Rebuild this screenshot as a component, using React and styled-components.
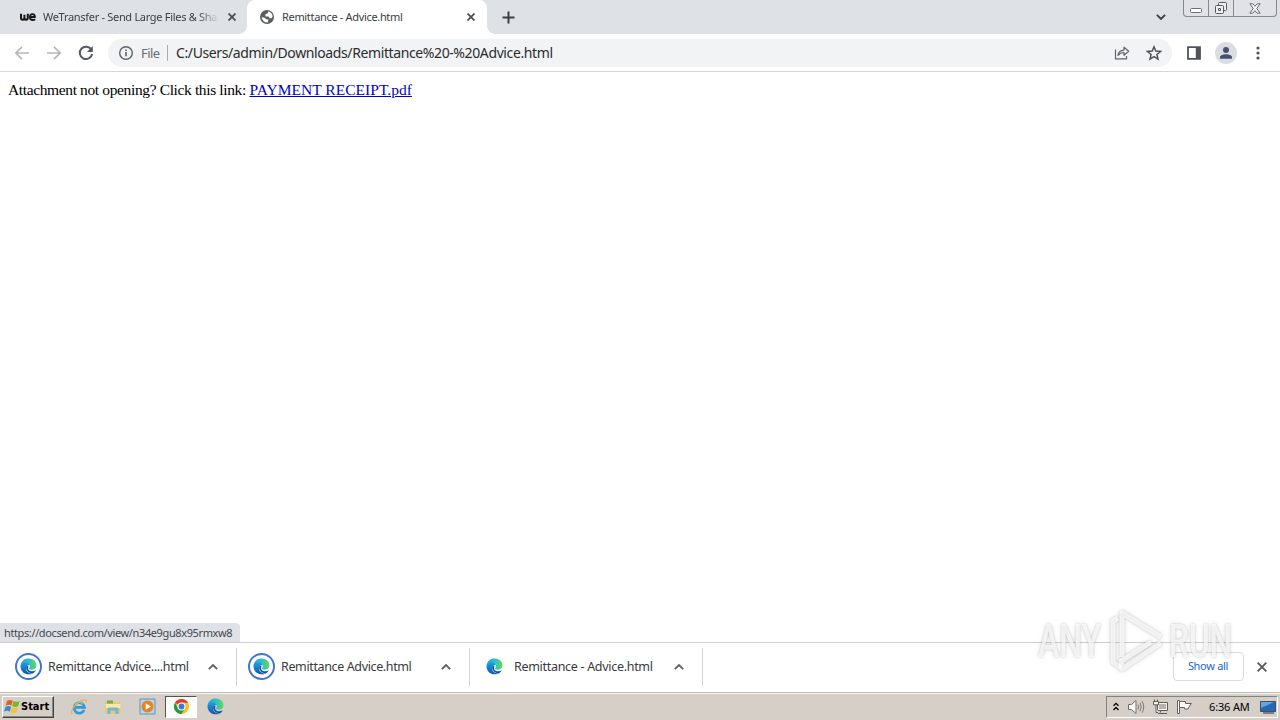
import React from "react"
import styled, { createGlobalStyle, css } from 'styled-components'

const GlobalStyle = createGlobalStyle`
  * {
    box-sizing: border-box;
  }

  body {
    margin: 0;
    overflow: hidden;
    background: #fff;
  }
`

const uiFont = '"Noto Sans", "Open Sans", sans-serif'
const frameColor = '#dee1e6'
const taskbarColor = '#d6cfc8'

const Screen = styled.div`
  position: relative;
  display: flex;
  flex-direction: column;
  width: 1280px;
  height: 720px;
  font-family: ${uiFont};
  color: #383a3e;
`

const Label = styled.span`
  display: block;
  flex: none;
  white-space: pre;
  font-size: ${props => props.$size || 11}px;
  line-height: 16px;
  letter-spacing: ${props => props.$spacing || 0}px;
`

const TabStrip = styled.div`
  display: flex;
  flex: none;
  height: 34px;
  background: ${frameColor};
`

const Tab = styled.div`
  position: relative;
  display: flex;
  align-items: center;
  flex: none;
  width: ${props => props.$active ? 240 : 247}px;
  padding: 0 ${props => props.$active ? 12 : 11}px 0 ${props => props.$active ? 12 : 20}px;
  color: #3c4043;
  ${props => props.$active && css`
    background: #fff;
    border-radius: 8px 8px 0 0;

    &::before,
    &::after {
      position: absolute;
      bottom: 0;
      width: 8px;
      height: 8px;
      content: "";
    }

    &::before {
      left: -8px;
      background: radial-gradient(circle at 0 0, transparent 7.5px, #fff 8px);
    }

    &::after {
      right: -8px;
      background: radial-gradient(circle at 100% 0, transparent 7.5px, #fff 8px);
    }
  `}
`

const TabTitle = styled(Label)`
  flex: 1;
  min-width: 0;
  margin-left: 7px;
  margin-right: ${props => props.$fade ? 9 : 0}px;
  overflow: hidden;
  ${props => props.$fade && css`
    mask-image: linear-gradient(to right, #000 88%, transparent);
  `}
`

const NewTab = styled.div`
  display: flex;
  align-items: center;
  margin-left: 15px;
`

const StripEnd = styled.div`
  display: flex;
  align-items: flex-start;
  margin-left: auto;
  padding-right: 3px;

  > svg {
    margin: 12px 17px 0 0;
  }
`

const WindowButtons = styled.div`
  display: flex;
  width: 94px;
  height: 17px;
  border: 1px solid #85888e;
  border-top: 0;
  border-radius: 0 0 4px 4px;
  background: #e0e2e7;
`

const WindowButton = styled.div`
  display: flex;
  align-items: center;
  justify-content: center;
  flex: none;
  width: ${props => props.$width}px;

  & + & {
    border-left: 1px solid #85888e;
  }
`

const Toolbar = styled.div`
  display: flex;
  align-items: center;
  flex: none;
  height: 38px;
  padding: 0 14px;
  border-bottom: 1px solid #d5d7da;
  background: #fff;
`

const NavButtons = styled.div`
  display: flex;
  gap: 16px;
  margin-right: 14px;
`

const AddressBar = styled.div`
  display: flex;
  align-items: center;
  width: 1064px;
  height: 28px;
  padding: 0 10px;
  border-radius: 14px;
  background: #f1f3f4;
`

const Scheme = styled(Label)`
  width: 19px;
  margin-left: 7px;
  padding-right: 7px;
  box-sizing: content-box;
  border-right: 1px solid #a9acb0;
  color: #6a6e73;
`

const Address = styled(Label)`
  margin-left: 8px;
  color: #2b2c30;
`

const AddressActions = styled.div`
  display: flex;
  gap: 16px;
  margin-left: auto;
`

const BrowserActions = styled.div`
  display: flex;
  align-items: center;
  margin-left: 15px;
`

const Avatar = styled.div`
  display: flex;
  align-items: center;
  justify-content: center;
  width: 22px;
  height: 22px;
  margin: 0 13px 0 14px;
  border-radius: 50%;
  background: #dadde2;
`

const Page = styled.main`
  flex: 1;
  padding: 8px;
  font: 15.5px/20px "Liberation Serif", serif;
  letter-spacing: -.37px;
  color: #000;
  background: #fff;

  a {
    color: #0000c8;
    letter-spacing: .03px;
    text-decoration: underline;
  }
`

const StatusBubble = styled.div`
  position: absolute;
  left: 0;
  bottom: 78px;
  display: flex;
  align-items: center;
  width: 240px;
  height: 19px;
  padding-left: 4px;
  border-radius: 0 4px 0 0;
  background: ${frameColor};
  color: #45484d;
`

const Shelf = styled.div`
  display: flex;
  align-items: center;
  flex: none;
  height: 50px;
  padding: 0 13px 2px 4px;
  border-top: 1px solid #cfcfcf;
  background: #fff;
`

const Download = styled.div`
  display: flex;
  align-items: center;
  width: 233px;
  height: 38px;
  padding: 0 18px 0 11px;
  border-right: 1px solid #d0d2d5;

  > svg {
    margin-left: auto;
  }
`

const FileIcon = styled.div`
  display: flex;
  align-items: center;
  justify-content: center;
  width: 27px;
  height: 27px;
  margin-right: 6px;
  border: 2px solid ${props => props.$ring ? '#3f77cf' : 'transparent'};
  border-radius: 50%;
`

const ShowAll = styled.div`
  display: flex;
  align-items: center;
  justify-content: center;
  width: 71px;
  height: 29px;
  margin-left: auto;
  margin-right: 13px;
  padding-right: 1px;
  padding-bottom: 2px;
  border: 1px solid #dadce0;
  border-radius: 4px;
  color: #1a66c9;
`

const Taskbar = styled.div`
  display: flex;
  align-items: center;
  flex: none;
  height: 28px;
  padding: 1px 2px 1px 2px;
  border-top: 1px solid #bdbab6;
  background: ${taskbarColor};
  box-shadow: inset 0 1px #f7f5f2;
`

const StartButton = styled.div`
  display: flex;
  align-items: center;
  width: 52px;
  height: 22px;
  padding-left: 1px;
  border: 1px solid;
  border-color: #fff #45423f #45423f #fff;
  box-shadow: inset -1px -1px #8b8782;
  color: #000;
  font-family: "DejaVu Sans Condensed", "DejaVu Sans", sans-serif;
  font-weight: bold;
`

const QuickLaunch = styled.div`
  display: flex;
  align-items: center;
  margin-left: 8px;
`

const Launcher = styled.div`
  display: flex;
  align-items: center;
  justify-content: center;
  width: 32px;
  height: 22px;
  margin: 0 1px;
  ${props => props.$pressed && css`
    border: 1px solid;
    border-color: #55514d #fff #fff #55514d;
    background: #fdfcfb;
  `}
`

const Tray = styled.div`
  display: flex;
  align-items: center;
  width: 172px;
  height: 22px;
  margin-left: auto;
  padding-left: 5px;
  border: 1px solid;
  border-color: #85817c #fff #fff #85817c;
  color: #000;

  > svg {
    flex: none;
    margin-right: 7px;
  }
`

const Clock = styled(Label)`
  width: 43px;
  margin: 0 8px 0 9px;
`

const Watermark = styled.svg`
  position: absolute;
  left: 1030px;
  top: 600px;
  filter: drop-shadow(0 0 1px rgba(0, 0, 0, .2)) drop-shadow(0 0 2px rgba(0, 0, 0, .16));
`

const Cross = ({ size = 8, color = '#4b4e52', width = 1.8 }) => (
  <svg width={size} height={size} viewBox="0 0 8 8" stroke={color} strokeWidth={width * 8 / size}>
    <path d="M.5.5l7 7M7.5.5l-7 7" />
  </svg>
)

const Chevron = ({ down }) => (
  <svg width="10" height="10" viewBox="0 0 10 10" fill="none" stroke={down ? '#3c4043' : '#5f6368'} strokeWidth="1.9">
    <path d={down ? "M.9 2.8L5 6.9l4.1-4.1" : "M.8 7.2L5 3l4.2 4.2"} />
  </svg>
)

const Arrow = ({ forward }) => (
  <svg width="16" height="16" viewBox="0 0 16 16" fill="none" stroke="#b5b7ba" strokeWidth="1.7">
    <path d={forward ? "M1 8h13M8 1.8L14.2 8 8 14.2" : "M15 8H2M8 1.8L1.8 8 8 14.2"} />
  </svg>
)

const Edge = ({ size = 17 }) => (
  <svg width={size} height={size} viewBox="0 0 32 32">
    <defs>
      <linearGradient id="edge-top" x1="0" y1=".5" x2="1" y2=".5">
        <stop offset="0" stopColor="#1ba5e0" />
        <stop offset=".5" stopColor="#2bc0cb" />
        <stop offset="1" stopColor="#62d957" />
      </linearGradient>
      <linearGradient id="edge-body" x1="0" y1="0" x2="0" y2="1">
        <stop offset="0" stopColor="#1fa0e6" />
        <stop offset="1" stopColor="#0d55b0" />
      </linearGradient>
    </defs>
    <path d="M1 15C2 6 8 1 16 1c9 0 15 6 15 13 0 5-4 8-9 8-4 0-6-1-5-3 2-2 2-4 1-6C14 7 5 8 1 15z" fill="url(#edge-top)" />
    <path d="M1 16C1 10 6 7 11 8c4 0 7 3 7 6-5-1-8 4-6 9 2 4 7 7 12 6-10 5-23-1-23-13z" fill="url(#edge-body)" />
    <path d="M12 16c-2 7 5 13 12 13 2-1 4-3 6-6-5 3-11 3-14-1-1-2-1-4 0-7-2 0-3 0-4 1z" fill="#12509b" />
  </svg>
)

const Globe = () => (
  <svg width="16" height="16" viewBox="0 0 16 16">
    <circle cx="8" cy="8" r="7" fill="#5a5d61" />
    <path d="M9 2.4v1.7L6.3 5.6l.2 1.9h3.1l1 1.8h1.9l1.1-1.6A5.4 5.4 0 009 2.4zM2.6 8.3l3 .4 1.6 1.6 2.3.3-.7 2.8A5.5 5.5 0 012.6 8.3z" fill="#fff" />
  </svg>
)

const WeTransferIcon = () => (
  <svg width="16" height="16" viewBox="0 0 16 16" fill="none" stroke="#17181a">
    <path d="M1 4.8v4.3q0 1.7 1.7 1.7T4.4 8.8V5.8v3q0 2 1.7 2t1.7-1.7V4.8" strokeWidth="2" />
    <path d="M10.2 8h4.7c0-2-1-2.9-2.4-2.9-1.5 0-2.6 1.2-2.6 2.9 0 2 1.1 3 2.8 3 1 0 1.8-.3 2.4-.8" strokeWidth="1.8" />
  </svg>
)

const Reload = () => (
  <svg width="16" height="16" viewBox="0 0 16 16">
    <path d="M13.4 4.8A6.2 6.2 0 1014.1 9" fill="none" stroke="#55585c" strokeWidth="2" />
    <path d="M14.8 1v6H8.9z" fill="#55585c" />
  </svg>
)

const Info = () => (
  <svg width="16" height="16" viewBox="0 0 16 16" fill="none" stroke="#5f6368">
    <circle cx="8" cy="8" r="6.3" strokeWidth="1.4" />
    <path d="M8 7v4.3M8 4.4v1.5" strokeWidth="1.6" />
  </svg>
)

const Share = () => (
  <svg width="16" height="16" viewBox="0 0 16 16" fill="none" stroke="#5f6368" strokeWidth="1.2">
    <path d="M1.5 4.5v9.4h11v-3" />
    <path d="M4 10.5c.3-3.4 2.3-5.2 6-5.4V2.2l4.7 4.1-4.7 4V7.5c-2.7 0-4.6.9-6 3z" strokeLinejoin="round" />
  </svg>
)

const Star = () => (
  <svg width="16" height="16" viewBox="0 0 16 16" fill="none" stroke="#505357" strokeWidth="1.5">
    <path d="M8 1.8l1.8 4.3 4.7.4-3.6 3 1.1 4.6L8 11.6l-4 2.5 1.1-4.6-3.6-3 4.7-.4z" />
  </svg>
)

const SidePanel = () => (
  <svg width="14" height="14" viewBox="0 0 14 14">
    <path d="M1 1.2h12v11.6H1z" fill="none" stroke="#505357" strokeWidth="1.8" />
    <path d="M8.8 1H13v12H8.8z" fill="#505357" />
  </svg>
)

const User = () => (
  <svg width="14" height="14" viewBox="0 0 14 14" fill="#46516d">
    <circle cx="7" cy="4" r="3" />
    <path d="M1 12.7v-1.5C1 9.2 4 8.2 7 8.2s6 1 6 3v1.5z" />
  </svg>
)

const WindowsFlag = () => (
  <svg width="17" height="17" viewBox="0 0 17 17">
    <path d="M3 3q3-2 5.7-.3L7.4 7.6Q4.7 6 1.7 7.8z" fill="#e65c27" />
    <path d="M9.6 3.1q3 1.5 6-.2L14.2 8q-3 1.7-5.9.1z" fill="#76b82a" />
    <path d="M1.4 8.9q3-1.8 5.7-.2l-1.3 5Q3 12 .1 13.8z" fill="#328ed2" />
    <path d="M8 9.2q3 1.5 6-.1l-1.4 5q-3 1.7-5.9.1z" fill="#f7c526" />
  </svg>
)

const InternetExplorer = () => (
  <svg width="18" height="18" viewBox="0 0 18 18" fill="none">
    <path d="M14.2 12A5.3 5.3 0 1114.6 9.4H5" stroke="#2c9bdc" strokeWidth="2.6" />
    <path d="M5 6.5A5.3 5.3 0 0113 6" stroke="#6cc6f0" strokeWidth="1.4" />
    <path d="M2.2 16.3C-.4 14.3 4 7 9 4c4-2.6 8-3 7.3.5" stroke="#e9b63a" strokeWidth="1.3" />
  </svg>
)

const Explorer = () => (
  <svg width="18" height="18" viewBox="0 0 18 18">
    <path d="M1.5 3h5l1 1.6h8.8v11H1.5z" fill="#e8c865" />
    <path d="M3 2.5h6v3H3z" fill="#6cad59" />
    <path d="M2 6h14.5v4H2z" fill="#fae9a3" />
    <path d="M3.5 16v-5q0-1.5 1.5-1.5h8q1.5 0 1.5 1.5v5h-3v-3.5h-5V16z" fill="#72b7df" />
  </svg>
)

const MediaPlayer = () => (
  <svg width="17" height="17" viewBox="0 0 17 17">
    <path d="M1 1h15v15H1z" fill="#b9d4ea" stroke="#5b93c4" />
    <circle cx="8.5" cy="8.5" r="6" fill="#ed8217" />
    <path d="M6.7 5.2v6.6l5.2-3.3z" fill="#fff" />
  </svg>
)

const Chrome = () => (
  <svg width="17" height="17" viewBox="0 0 18 18">
    <circle cx="9" cy="9" r="8" fill="#fbc116" />
    <path d="M9 9L2.07 5A8 8 0 0115.93 5H9z" fill="#e33b2e" />
    <path d="M2.07 5A8 8 0 009 17l3.5-6L9 9 5.5 11z" fill="#229a49" />
    <circle cx="9" cy="9" r="4.2" fill="#fff" />
    <circle cx="9" cy="9" r="3.1" fill="#3979e4" />
  </svg>
)

const TrayArrows = () => (
  <svg width="8" height="12" viewBox="0 0 8 12" fill="none" stroke="#000" strokeWidth="1.3">
    <path d="M1.5 4.8L4 2.3l2.5 2.5M1.5 9L4 6.5 6.5 9" />
  </svg>
)

const Speaker = () => (
  <svg width="18" height="16" viewBox="0 0 18 16" fill="none" stroke="#716e6b">
    <path d="M1.5 5.5h3L9 1.5v13l-4.5-4h-3z" fill="#f9f8f6" strokeLinejoin="round" />
    <path d="M11 5.5q1.4 2.5 0 5M13 3.8q2.5 4.2 0 8.4M15 2.2q3.5 5.8 0 11.6" strokeWidth=".9" />
  </svg>
)

const Network = () => (
  <svg width="17" height="16" viewBox="0 0 17 16" fill="#f5f4f1" stroke="#605d5a">
    <path d="M5.5 3.5h10v8h-10zM8.5 11.5v2M6 14.5h9" />
    <path d="M7 5h7v5H7z" fill="#b7b4b0" stroke="none" />
    <path d="M1.5 2.5h5v3.3h-5zM2.5 .5v2M5.5 .5v2M4 6v7.5h2" />
  </svg>
)

const ActionFlag = () => (
  <svg width="17" height="16" viewBox="0 0 17 16" fill="#faf9f7" stroke="#66635f">
    <path d="M1.5 1.5h2v13h-2z" />
    <path d="M3.5 2.5h6v2h6L13.5 7l-1.5 3H8.5V8.5h-5z" strokeLinejoin="round" />
  </svg>
)

const Desktop = () => (
  <svg width="16" height="14" viewBox="0 0 16 14">
    <path d="M.5 1.5h15v10H.5z" fill="#2469b6" stroke="#3c5069" />
    <path d="M1 2h13L1 8z" fill="#65a6df" />
    <path d="M3 13h11" stroke="#595652" strokeWidth="1.4" />
  </svg>
)

const downloads = [
  { name: 'Remittance Advice....html', ring: true, spacing: -.32 },
  { name: 'Remittance Advice.html', ring: true, spacing: -.37 },
  { name: 'Remittance - Advice.html', ring: false, spacing: -.3 },
]

const App = () => {
  return (
    <Screen>
      <GlobalStyle />
      <TabStrip>
        <Tab>
          <WeTransferIcon />
          <TabTitle $fade $spacing={-.3}>WeTransfer - Send Large Files &amp; Shar</TabTitle>
          <Cross />
        </Tab>
        <Tab $active>
          <Globe />
          <TabTitle $spacing={-.33}>Remittance - Advice.html</TabTitle>
          <Cross />
        </Tab>
        <NewTab>
          <svg width="13" height="13" viewBox="0 0 13 13" stroke="#3c4043" strokeWidth="2">
            <path d="M6.5.5v12M.5 6.5h12" />
          </svg>
        </NewTab>
        <StripEnd>
          <Chevron down />
          <WindowButtons>
            <WindowButton $width={24}>
              <svg width="12" height="16" viewBox="0 0 12 16" fill="#fff" stroke="#6b6e74">
                <rect x=".5" y="8.5" width="11" height="4" rx="1" />
              </svg>
            </WindowButton>
            <WindowButton $width={25}>
              <svg width="14" height="14" viewBox="0 0 14 14" fill="#eceef0" stroke="#56595e">
                <rect x="4.5" y="1.5" width="8" height="8" rx="1" />
                <rect x="1.5" y="4.5" width="8" height="8" rx="1" />
                <path d="M4.5 7.5h2v2h-2z" />
              </svg>
            </WindowButton>
            <WindowButton $width={42}>
              <svg width="12" height="11" viewBox="0 0 12 11" fill="#f3f4f6" stroke="#676a70" strokeLinejoin="round">
                <path d="M.8.8h3L6 3.3 8.2.8h3L7.8 5.5l3.4 4.7h-3L6 7.7l-2.2 2.5h-3l3.4-4.7z" />
              </svg>
            </WindowButton>
          </WindowButtons>
        </StripEnd>
      </TabStrip>
      <Toolbar>
        <NavButtons>
          <Arrow />
          <Arrow forward />
          <Reload />
        </NavButtons>
        <AddressBar>
          <Info />
          <Scheme $size={13} $spacing={-.55}>File</Scheme>
          <Address $size={14} $spacing={-.39}>C:/Users/admin/Downloads/Remittance%20-%20Advice.html</Address>
          <AddressActions>
            <Share />
            <Star />
          </AddressActions>
        </AddressBar>
        <BrowserActions>
          <SidePanel />
          <Avatar><User /></Avatar>
          <svg width="16" height="16" viewBox="0 0 16 16" fill="#505357">
            <circle cx="8" cy="3" r="1.6" />
            <circle cx="8" cy="8" r="1.6" />
            <circle cx="8" cy="13" r="1.6" />
          </svg>
        </BrowserActions>
      </Toolbar>
      <Page>
        Attachment not opening? Click this link: <a href="#receipt">PAYMENT RECEIPT.pdf</a>
      </Page>
      <Shelf>
        {downloads.map((file) => (
          <Download key={file.name}>
            <FileIcon $ring={file.ring}><Edge /></FileIcon>
            <Label $size={12.5} $spacing={file.spacing}>{file.name}</Label>
            <Chevron />
          </Download>
        ))}
        <ShowAll><Label $spacing={-.3}>Show all</Label></ShowAll>
        <Cross size={10} color="#55585c" />
      </Shelf>
      <Taskbar>
        <StartButton>
          <WindowsFlag />
          <Label $size={11}>Start</Label>
        </StartButton>
        <QuickLaunch>
          <Launcher><InternetExplorer /></Launcher>
          <Launcher><Explorer /></Launcher>
          <Launcher><MediaPlayer /></Launcher>
          <Launcher $pressed><Chrome /></Launcher>
          <Launcher><Edge /></Launcher>
        </QuickLaunch>
        <Tray>
          <TrayArrows />
          <Speaker />
          <Network />
          <ActionFlag />
          <Clock $spacing={-.15}>6:36 AM</Clock>
          <Desktop />
        </Tray>
      </Taskbar>
      <StatusBubble><Label $spacing={-.38}>https://docsend.com/view/n34e9gu8x95rmxw8</Label></StatusBubble>
      <Watermark width="210" height="80" viewBox="0 0 210 80">
        <g fill="#fff" fillOpacity=".75" fontFamily="Roboto, sans-serif" fontSize="47" fontWeight="500">
          <text x="8" y="57" textLength="63" lengthAdjust="spacingAndGlyphs">ANY</text>
          <text x="139" y="57" textLength="63" lengthAdjust="spacingAndGlyphs">RUN</text>
        </g>
        <g fill="none" stroke="#fff" strokeOpacity=".75" strokeWidth="5" strokeLinejoin="round">
          <path d="M88 18l-5 3v41l8 6" />
          <path d="M92 57V13l39 24M131 43L92 69l-1-8 30-19" />
        </g>
      </Watermark>
    </Screen>
  )
}
export default App
